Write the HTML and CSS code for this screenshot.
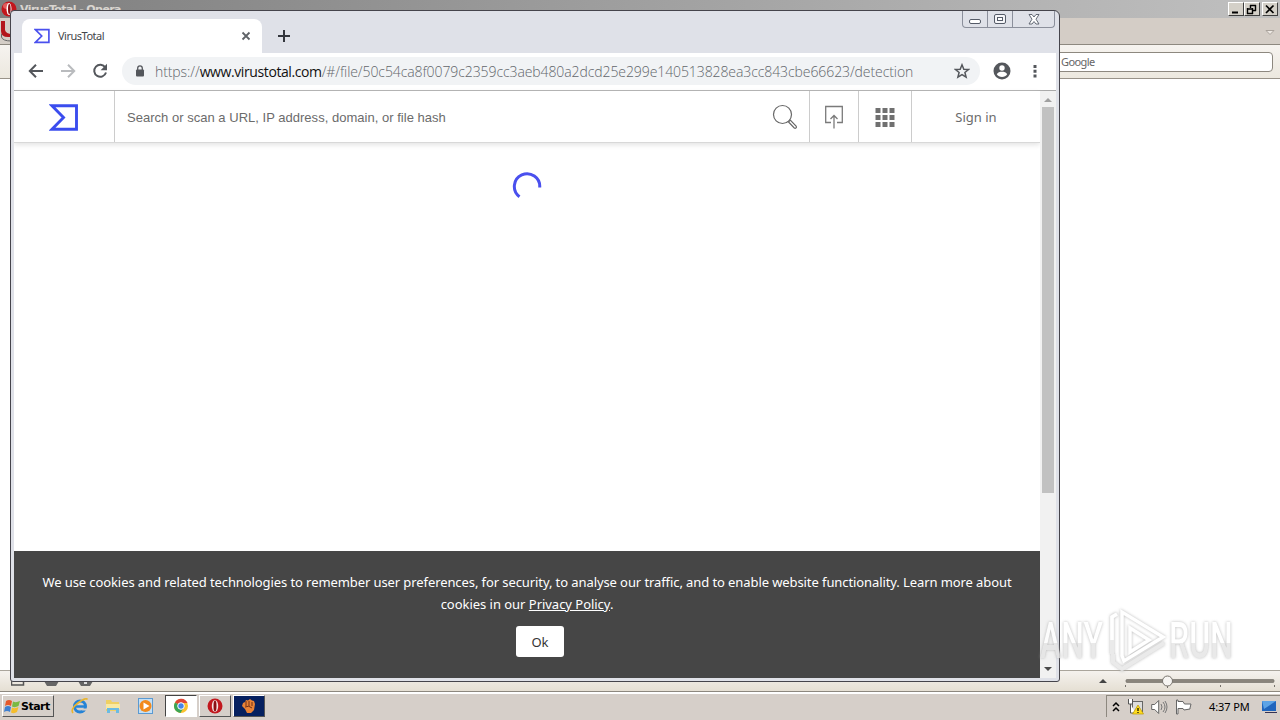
FILE: index.html
```html
<!DOCTYPE html>
<html lang="en">
<head>
  <meta charset="UTF-8">
  <title>VirusTotal</title>
  <link rel="stylesheet" href="styles.css">
</head>
<body>
  <div class="desktop">

    <!-- Opera, behind -->
    <div class="opera">
      <div class="opera-title">
        <svg class="opera-logo" width="16" height="16" viewBox="0 0 16 16"><ellipse cx="8" cy="8" rx="7.5" ry="7.5" fill="#c3161c"/><ellipse cx="6" cy="5" rx="4" ry="3" fill="#ee7a78" opacity=".7"/><ellipse cx="8" cy="8" rx="2.5" ry="6" fill="#fff"/><ellipse cx="8.3" cy="8" rx="1.3" ry="5" fill="#8c1015"/></svg>
        <span class="opera-name">VirusTotal - Opera</span>
        <div class="classic-buttons">
          <span class="cbtn"><svg width="12" height="11"><path d="M2 8.500h6" stroke="#000" stroke-width="2"/></svg></span>
          <span class="cbtn"><svg width="12" height="11"><path d="M4 1.500h6M4.500 1v3M9.500 1v6M7 6.500h3M1 5h6M1.500 4v6M6.500 4v6M1 9.500h6" stroke="#000" stroke-width="1.400" fill="none"/></svg></span>
          <span class="cbtn last"><svg width="12" height="11"><path d="M2 1.500l7.500 7.500M9.500 1.500L2 9" stroke="#000" stroke-width="1.700"/></svg></span>
        </div>
      </div>
      <div class="opera-tabs">
        <div class="opera-menu"><svg width="11" height="22"><path d="M0 1h4v9q1 4 7 4v3H7Q0 17 0 11z" fill="#b3151b"/><path d="M.5 14v3q1 4 10 4" fill="none" stroke="#666"/></svg></div>
        <svg class="opera-arrow" width="10" height="7"><path d="M1 1.500h8L5 5.500z" fill="#eee9e4" stroke="#aaa39c"/></svg>
      </div>
      <div class="opera-bar"><div class="opera-search">Google</div></div>
      <div class="opera-page"></div>
      <div class="opera-status">
        <svg class="status-icons" width="84" height="16"><path d="M.5 0v14h12V8M3 10l3-4" fill="none" stroke="#555" stroke-width="1.500"/><path d="M33 10h15l-3 5h-9zM67 10h15l-3 5h-9z" fill="#666"/><path d="M73 10h3v3h-3z" fill="#ddd"/></svg>
        <svg class="zoom-slider" width="190" height="20"><path d="M9 12l4-4 4 4z" fill="#444"/><rect x="36" y="8.500" width="148" height="3" rx="1" fill="#8a857c" stroke="#77736c" stroke-width=".7"/><path d="M35.500 14v2M77.500 14v3M130.500 14v2M184.500 14v2" stroke="#77736c"/><circle cx="77.500" cy="10" r="5" fill="#f7f5f2" stroke="#77736c"/></svg>
      </div>
    </div>

    <!-- Chrome, in front -->
    <div class="chrome">
      <div class="tabstrip">
        <div class="tab">
          <svg class="favicon" width="16" height="16" viewBox="0 0 29 27"><path d="M2.500 2H27v23H2.500L14 13.500z" fill="none" stroke="#4a50ee" stroke-width="3"/></svg>
          <span class="tab-title">VirusTotal</span>
          <svg width="10" height="10"><path d="M1.500 1.500l7 7M8.500 1.500l-7 7" stroke="#5f6368" stroke-width="1.800"/></svg>
        </div>
        <svg class="new-tab" width="12" height="12"><path d="M6 0v12M0 6h12" stroke="#33363d" stroke-width="2"/></svg>
        <div class="aero-buttons">
          <span class="aero-min"><svg width="12" height="5"><rect x=".5" y=".5" width="11" height="4" rx="1.500" fill="#fff" stroke="#555b68"/></svg></span>
          <span class="aero-max"><svg width="12" height="11"><rect x=".5" y=".5" width="11" height="9" rx="1.500" fill="#f5f5f8" stroke="#555b68"/><rect x="3.500" y="3.500" width="5" height="3" fill="#fff" stroke="#555b68"/></svg></span>
          <span class="aero-close"><svg width="12" height="11"><path d="M1 .5h3l2 2.500 2-2.500h3L8 5.200 11 10H8L6 7.500 4 10H1l3-4.800z" fill="#fff" stroke="#555b68" stroke-width=".9"/></svg></span>
        </div>
      </div>

      <div class="toolbar">
        <svg class="nav" width="16" height="16"><path d="M15 8H2.500M8 1.800L1.800 8 8 14.200" fill="none" stroke="#54575c" stroke-width="2"/></svg>
        <svg class="nav" width="16" height="16"><path d="M1 8h12.500M8 1.800L14.200 8 8 14.200" fill="none" stroke="#b9bbbe" stroke-width="2"/></svg>
        <svg class="nav" width="16" height="16"><path d="M13.300 4.500A6 6 0 1 0 14 9.500" fill="none" stroke="#54575c" stroke-width="2"/><path d="M15 .8v6.400H8.600z" fill="#54575c"/></svg>
        <div class="omnibox">
          <svg width="10" height="13"><rect x="1" y="4.500" width="8" height="7" rx="1" fill="#54575c"/><path d="M2.700 5V3.200a2.300 2.300 0 0 1 4.600 0V5" fill="none" stroke="#54575c" stroke-width="1.300"/></svg>
          <span class="url">https://<b>www.virustotal.com</b>/#/file/50c54ca8f0079c2359cc3aeb480a2dcd25e299e140513828ea3cc843cbe66623/detection</span>
          <svg class="star" width="16" height="16"><path d="M8 1.800l1.800 4.400 4.700.3-3.600 3 1.200 4.600L8 11.600l-4.100 2.500 1.200-4.600-3.600-3 4.700-.3z" fill="none" stroke="#54575c" stroke-width="1.500"/></svg>
        </div>
        <svg class="avatar" width="18" height="18"><circle cx="9" cy="9" r="8.500" fill="#54575c"/><circle cx="9" cy="6" r="2.700" fill="#fff"/><path d="M3.800 12.300c1-2 3-2.600 5.200-2.600s4.200.6 5.200 2.600c-1.200 1.800-3 2.800-5.200 2.800s-4-1-5.200-2.800z" fill="#fff"/></svg>
        <svg class="dots" width="4" height="14"><path d="M.5 1h3v3h-3zM.5 5.700h3v3h-3zM.5 10.500h3v3h-3z" fill="#54575c"/></svg>
      </div>

      <div class="view">
        <div class="page">
          <header class="vt-header">
            <div class="vt-logo"><svg width="29" height="27"><path d="M3 1.700h24.500v23.600H3L14.500 13.500z" fill="none" stroke="#3b4dee" stroke-width="2.900"/></svg></div>
            <div class="vt-search"><span>Search or scan a URL, IP address, domain, or file hash</span>
              <svg width="26" height="26"><circle cx="10.500" cy="10.500" r="9" fill="none" stroke="#686868" stroke-width="1.200"/><path d="M16.500 18l1.800-1.800 6 6.200q.5 1-.4 1.700-.8.500-1.600-.1z" fill="#fff" stroke="#686868" stroke-width="1.200"/></svg>
            </div>
            <div class="vt-upload"><svg width="18" height="24"><path d="M6 17.500H.7V1.500h16.600v16H12M9 23.500V10.500M5.500 14L9 10.500l3.500 3.500" fill="none" stroke="#7a7a7a" stroke-width="1.300"/></svg></div>
            <div class="vt-apps"><svg width="20" height="20"><path d="M.5 1h5v5h-5zM7.500 1h5v5h-5zM14.500 1h5v5h-5zM.5 8h5v5h-5zM7.500 8h5v5h-5zM14.500 8h5v5h-5zM.5 15h5v5h-5zM7.500 15h5v5h-5zM14.500 15h5v5h-5z" fill="#707070"/></svg></div>
            <div class="vt-sign">Sign in</div>
          </header>
          <main class="vt-main">
            <svg width="30" height="30"><path d="M7.500 24.700A12.700 12.700 0 1 1 27.700 15.500" fill="none" stroke="#4a50ee" stroke-width="3"/></svg>
          </main>
          <div class="cookies">
            <p><span class="line-one">We use cookies and related technologies to remember user preferences, for security, to analyse our traffic, and to enable website functionality. Learn more about</span><br><span class="line-two">cookies in our <a>Privacy Policy</a>.</span></p>
            <button>Ok</button>
          </div>
        </div>
        <div class="scrollbar">
          <svg width="8" height="4"><path d="M0 4l4-4 4 4z" fill="#a0a0a0"/></svg>
          <div class="thumb"></div>
          <svg class="down" width="8" height="4"><path d="M0 0h8L4 4z" fill="#4a4a4a"/></svg>
        </div>
      </div>
    </div>

    <div class="watermark">
      <span class="wm-any">ANY</span>
      <svg width="58" height="66"><path d="M4 46V9l5-3M5 46v8l9 7 42-26" fill="none" stroke="#e6e6e6" stroke-width="4"/><path d="M4 32V9l5-3M14 48V4l41 25-39 24zM22 20v24l19-12z" fill="none" stroke="#fff" stroke-width="3.500"/></svg>
      <span class="wm-run">RUN</span>
    </div>

    <div class="taskbar">
      <div class="start">
        <svg width="17" height="17"><path d="M2 3q3-2 6 0L7 8Q4 6 1 8z" fill="#e5582a"/><path d="M9 3.500q3 1.500 7-.5l-1.500 5Q11 10 8 8.500z" fill="#79b943"/><path d="M1 9q3-2 6 0l-1 5q-3-2-6 0z" fill="#3f7fd0"/><path d="M8 9.500q3 1.500 6.500-.5L13 14q-3 2-6 .5z" fill="#f5bd2c"/></svg>
        <span>Start</span>
      </div>
      <svg class="quick" width="18" height="18"><circle cx="9" cy="9.500" r="5.500" fill="none" stroke="#2583d6" stroke-width="3"/><path d="M5 9.500h9" stroke="#2583d6" stroke-width="2.500"/><path d="M11 11.500h5v2h-5z" fill="#d4cdc8"/><path d="M2 16Q-1 12 7 6q8-6 9.500-3.500" fill="none" stroke="#e9b42c" stroke-width="1.600"/></svg>
      <svg class="quick" width="18" height="18"><path d="M2 3h5l1 2h7v9H2z" fill="#efd064"/><path d="M2 7h14v5H2z" fill="#f9e9a2"/><path d="M3 16v-5h12v5h-3v-3H6v3z" fill="#6bbbe2"/></svg>
      <svg class="quick last" width="18" height="18"><rect x="1.500" y="1.500" width="14" height="15" fill="#c5dff4" stroke="#5a9ad2"/><circle cx="8.500" cy="9" r="6" fill="#f28a1c"/><path d="M6.500 5.500l6 3.500-6 3.500z" fill="#fff"/></svg>
      <div class="task active"><svg width="16" height="16"><circle cx="8" cy="8" r="7" fill="#fac22e"/><path d="M8 8L2 4.400A7 7 0 0 1 14.500 5H8z" fill="#df4536"/><path d="M8 8L2 4.400A7 7 0 0 0 7.500 15L11 9z" fill="#3ba556"/><circle cx="8" cy="8" r="3.300" fill="#4485e8" stroke="#fff"/></svg></div>
      <div class="task"><svg width="16" height="16"><circle cx="8" cy="8" r="7.500" fill="#c2181e"/><ellipse cx="8" cy="8" rx="3.200" ry="6" fill="#f4e4e2"/><ellipse cx="8" cy="8" rx="1.500" ry="5.500" fill="#8d0f14"/></svg></div>
      <div class="task navy"><svg width="16" height="16"><path d="M2 5l2-1 1-2 2 .5L9 1l2 1.500 2 .5 1 3-1 6-3 3H6l-2-4-3-3z" fill="#e98236"/><path d="M5 3v5M8 3v5M11 4v4M4 9q4-2 7 1" stroke="#713017" fill="none"/></svg></div>

      <div class="tray">
        <svg class="chevrons" width="8" height="12"><path d="M1 5l3-3 3 3M1 10l3-3 3 3" fill="none" stroke="#000" stroke-width="1.500"/></svg>
        <svg width="17" height="17"><rect x="5.500" y="3.500" width="10" height="10" fill="#ddd" stroke="#666"/><path d="M1.500 1v5h4V1M3.500 6v9h5" fill="#fff" stroke="#555"/><path d="M11 7l5.500 9h-11z" fill="#ffdc1f" stroke="#b99500" stroke-width=".7"/><path d="M11 10v3M11 14v1" stroke="#000" stroke-width="1.200"/></svg>
        <svg width="17" height="16"><path d="M.7 5.500h3l4-4v13l-4-4h-3z" fill="#fff" stroke="#666"/><path d="M10 5q2 3 0 6M12 3q4 5 0 10M14 2q4 6 0 12" fill="none" stroke="#777"/></svg>
        <svg width="17" height="16"><path d="M1.500 1v14h1.500V9.500h5l1 1.500 6-1V9l1-4H9.500L8 2.500H3V1z" fill="#fff" stroke="#666"/></svg>
        <span class="clock">4:37 PM</span>
        <svg class="show-desktop" width="16" height="14"><path d="M1 1h14v10H1z" fill="#1f65bd"/><path d="M1 1h14L3 9z" fill="#5ca3e6"/><path d="M4 12.500h12" stroke="#335" /></svg>
      </div>
    </div>
  </div>
</body>
</html>
```
FILE: styles.css
```css
* {
  box-sizing: border-box;
}

body {
  margin: 0;
  font-family: "Noto Sans", sans-serif;
}

svg {
  display: block;
  flex: none;
}

.desktop {
  position: relative;
  width: 1280px;
  height: 720px;
  overflow: hidden;
  display: flex;
  flex-direction: column;
}

/* Opera */
.opera {
  height: 692px;
  display: flex;
  flex-direction: column;
  background: #fff;
}

.opera-title {
  height: 18px;
  display: flex;
  align-items: center;
  padding: 0 2px 0 1px;
  background: linear-gradient(90deg, #7f7f7f, #c0c0c0);
}

.opera-name {
  margin-left: 3px;
  color: #d9d5d0;
  font: bold 11px "DejaVu Sans", sans-serif;
  letter-spacing: -0.6px;
}

.classic-buttons {
  margin-left: auto;
  display: flex;
}

.cbtn {
  width: 16px;
  height: 14px;
  padding: 1px;
  background: #d4d0c8;
  border: 1px solid;
  border-color: #fff #404040 #404040 #fff;
}

.cbtn.last {
  margin-left: 2px;
}

.opera-tabs {
  height: 27px;
  display: flex;
  justify-content: space-between;
  align-items: center;
  padding-right: 5px;
  background: #d4cdc6;
  border-bottom: 1px solid #8d887f;
}

.opera-menu {
  padding-left: 1px;
}

.opera-arrow {
  margin-top: 2px;
}

.opera-bar {
  height: 34px;
  padding: 7px 7px 0 0;
  background: linear-gradient(#f6f3ef, #ece8df);
  border-bottom: 1px solid #999389;
}

.opera-search {
  width: 260px;
  height: 20px;
  margin-left: auto;
  padding-left: 47px;
  border: 1px solid #8d887f;
  border-radius: 4px;
  background: #fff;
  color: #666;
  font-size: 11px;
  line-height: 18px;
  letter-spacing: -0.6px;
}

.opera-page {
  flex: 1;
}

.opera-status {
  height: 22px;
  display: flex;
  justify-content: space-between;
  padding-left: 11px;
  background: linear-gradient(#f5f2ee, #e5dfd3);
  border-top: 1px solid #aaa59c;
  border-bottom: 1px solid #8d887f;
}

/* Chrome */
.chrome {
  position: absolute;
  left: 10px;
  top: 10px;
  width: 1050px;
  height: 672px;
  padding: 0 3px 3px;
  display: flex;
  flex-direction: column;
  background: #dfe1e8;
  border: 1px solid #45444b;
  border-radius: 4px 6px 3px 3px;
  overflow: hidden;
}

.tabstrip {
  height: 42px;
  display: flex;
  padding-left: 8px;
}

.tab {
  width: 240px;
  height: 34px;
  margin-top: 8px;
  padding: 0 11px 1px 12px;
  display: flex;
  align-items: center;
  background: #fff;
  border-radius: 8px 8px 0 0;
}

.tab-title {
  flex: 1;
  margin-left: 8px;
  color: #44474c;
  font-size: 11px;
  letter-spacing: -0.5px;
}

.new-tab {
  margin: 19px 0 0 16px;
}

.aero-buttons {
  display: flex;
  height: 17px;
  margin: 0 1px 0 auto;
  border: 1px solid #8b8f9b;
  border-top: 0;
  border-radius: 0 0 4px 4px;
}

.aero-buttons span {
  display: flex;
  align-items: center;
  justify-content: center;
  width: 24px;
}

.aero-buttons .aero-min {
  padding-top: 4px;
}

.aero-buttons .aero-max {
  width: 26px;
  border: solid #8b8f9b;
  border-width: 0 1px;
}

.aero-buttons .aero-close {
  width: 41px;
}

.toolbar {
  height: 38px;
  display: flex;
  align-items: center;
  padding: 0 0 1px 14px;
  background: #fff;
  border-bottom: 1px solid #a9a9a9;
}

.nav {
  margin-right: 16px;
}

.omnibox {
  width: 858px;
  height: 28px;
  margin-left: -2px;
  padding: 0 10px 0 13px;
  display: flex;
  align-items: center;
  border-radius: 14px;
  background: #f1f3f5;
}

.url {
  margin-left: 10px;
  white-space: nowrap;
  color: #62666b;
  font: 300 14px "Open Sans", sans-serif;
  letter-spacing: -0.09px;
}

.url b {
  color: #111;
  font-weight: 400;
  letter-spacing: -0.4px;
}

.star {
  margin-left: auto;
}

.avatar {
  margin-left: 13px;
}

.dots {
  margin-left: 22px;
}

.view {
  flex: 1;
  display: flex;
}

.page {
  width: 1026px;
  display: flex;
  flex-direction: column;
  background: #fff;
}

.vt-header {
  height: 52px;
  display: flex;
  border-bottom: 1px solid #d8d8d8;
  box-shadow: 0 2px 5px #e4e4e4;
  color: #6b6b6b;
}

.vt-header > div {
  display: flex;
  align-items: center;
  justify-content: center;
  border-right: 1px solid #ccc;
}

.vt-header .vt-logo {
  width: 101px;
  padding: 1px 1px 0 0;
}

.vt-header .vt-search {
  width: 695px;
  justify-content: space-between;
  padding: 0 11px 0 12px;
  font: 13px "Liberation Sans", sans-serif;
  letter-spacing: 0.02px;
}

.vt-search span {
  padding-top: 2px;
}

.vt-header .vt-upload {
  width: 49px;
}

.vt-header .vt-apps {
  width: 53px;
}

.vt-header .vt-sign {
  flex: 1;
  border: 0;
  font-size: 13px;
}

.vt-main {
  flex: 1;
  display: flex;
  justify-content: center;
  padding-top: 29px;
}

.cookies {
  height: 127px;
  padding-top: 20px;
  background: #464646;
  color: #fff;
  font-size: 13px;
  text-align: center;
}

.cookies p {
  margin: 0 0 11px;
  line-height: 22px;
  white-space: nowrap;
}

.line-one {
  letter-spacing: -0.09px;
}

.line-two {
  letter-spacing: -0.03px;
}

.cookies a {
  text-decoration: underline;
}

.cookies button {
  display: block;
  width: 48px;
  height: 31px;
  margin: 0 auto 0 502px;
  border: 0;
  border-radius: 3px;
  background: #fff;
  color: #333;
  font: 13px "Noto Sans", sans-serif;
}

.scrollbar {
  width: 16px;
  display: flex;
  flex-direction: column;
  align-items: center;
  padding: 7px 0;
  background: #f1f1f1;
}

.thumb {
  width: 12px;
  height: 386px;
  margin-top: 5px;
  background: #c1c1c1;
}

.scrollbar .down {
  margin-top: auto;
}

/* overlay logo */
.watermark {
  position: absolute;
  left: 1040px;
  top: 608px;
  display: flex;
  align-items: center;
  opacity: 0.8;
  font: 500 50px/66px Roboto, sans-serif;
  filter: drop-shadow(0 0 1.500px #aaa);
}

.wm-any,
.wm-run {
  width: 62px;
  transform: scaleX(0.64);
  transform-origin: left;
  color: transparent;
  background: linear-gradient(#fff 53%, #e4e4e4 53%);
  -webkit-background-clip: text;
  background-clip: text;
}

.wm-any,
.wm-run {
  width: 98px;
  margin-right: -36px;
}

.watermark svg {
  margin: 0 3px 0 6px;
}

/* Taskbar */
.taskbar {
  height: 28px;
  display: flex;
  align-items: center;
  padding: 0 0 2px 2px;
  background: #d6cfc9;
  border-top: 2px solid #fff;
}

.start {
  width: 52px;
  height: 22px;
  display: flex;
  align-items: center;
  padding-left: 1px;
  margin-right: 17px;
  border: 1px solid;
  border-color: #fff #555 #555 #fff;
  font: bold 11px "DejaVu Sans", sans-serif;
  letter-spacing: -0.5px;
}

.quick {
  margin-right: 15px;
}

.quick.last {
  margin-right: 10px;
}

.task {
  width: 32px;
  height: 22px;
  margin-right: 2px;
  display: flex;
  align-items: center;
  justify-content: center;
  border: 1px solid;
  border-color: #fff #555 #555 #fff;
}

.active {
  background: #fff;
  border-color: #444 #fff #fff #444;
}

.navy {
  background: #06205f;
}

.tray {
  width: 174px;
  height: 22px;
  margin-left: auto;
  display: flex;
  align-items: center;
  gap: 7px;
  padding-left: 5px;
  border: solid #8d887f;
  border-width: 1px 0 0 1px;
}

.clock {
  margin-left: 10px;
  white-space: nowrap;
  font-size: 11px;
  letter-spacing: -0.1px;
}

.show-desktop {
  margin-left: 4px;
}
```
